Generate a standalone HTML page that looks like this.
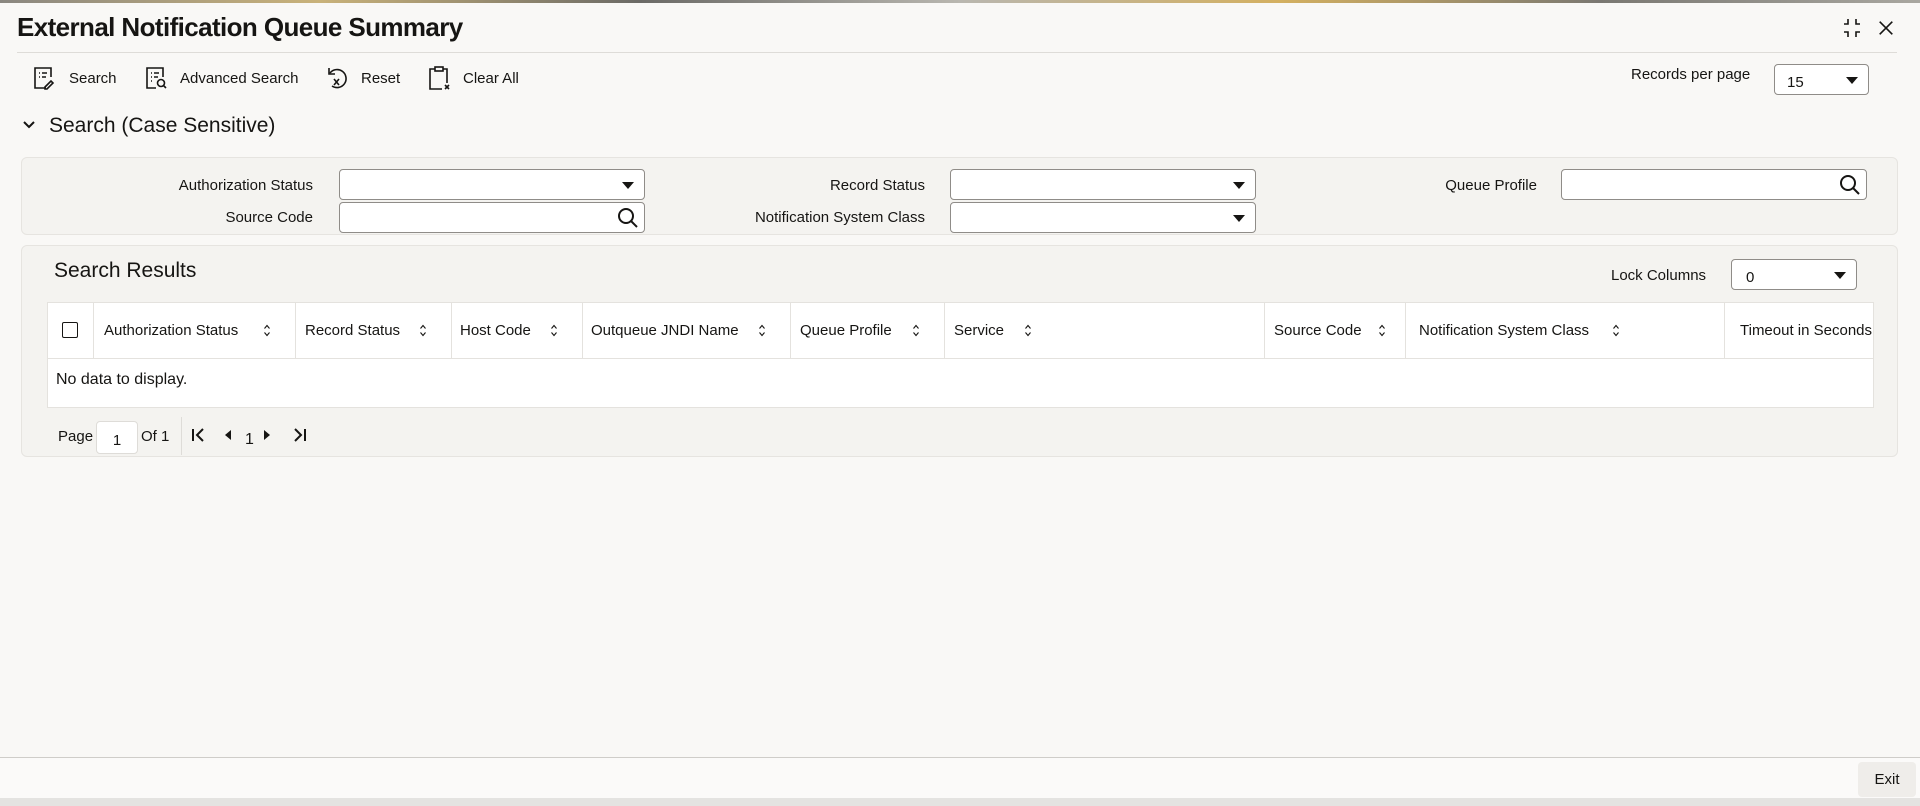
<!DOCTYPE html>
<html><head><meta charset="utf-8"><style>
*{box-sizing:border-box;margin:0;padding:0}
body{width:1920px;height:806px;overflow:hidden;background:#f9f8f6;font-family:"Liberation Sans",sans-serif;color:#161513;position:relative;font-size:15px}
.a{position:absolute;white-space:nowrap}
.lbl{position:absolute;text-align:right;font-size:15px;white-space:nowrap}
.inp{position:absolute;background:#fff;border:1px solid #8f8c88;border-radius:4px;height:31px}
.tri{position:absolute;right:10px;top:12px;width:0;height:0;border-left:6px solid transparent;border-right:6px solid transparent;border-top:7px solid #161513}
.mag{position:absolute;right:4px;top:3px}
.panel{position:absolute;left:21px;width:1877px;background:#f4f3f0;border:1px solid #e6e4e0;border-radius:6px}
.th{position:absolute;top:303px;height:56px;line-height:56px;font-size:15px;white-space:nowrap}
.vl{position:absolute;top:302px;height:56px;width:1px;background:#e4e2de}
.srt{position:absolute;top:324px}
</style></head><body>
<div class="a" style="left:0;top:0;width:1920px;height:3px;background:linear-gradient(90deg,#8a8780,#c9b27a,#6b6a66,#b9b7b0,#d4b060,#7a7872,#a9a7a0)"></div>
<div class="a" style="left:17px;top:12px;font-size:26px;font-weight:bold;letter-spacing:-0.6px">External Notification Queue Summary</div>
<svg class="a" style="left:1841px;top:17px" width="22" height="22" viewBox="0 0 22 22" fill="none" stroke="#161513" stroke-width="1.6"><path d="M7 2v5H3M15 2v5h4M7 20v-5H3M15 20v-5h4"/></svg>
<svg class="a" style="left:1877px;top:19px" width="18" height="18" viewBox="0 0 20 20" stroke="#161513" stroke-width="1.8"><path d="M3 3l14 14M17 3L3 17"/></svg>
<div class="a" style="left:17px;top:52px;width:1880px;height:1px;background:#dedcd8"></div>

<svg class="a" style="left:33px;top:66px" width="22" height="24" viewBox="0 0 22 24" fill="none" stroke="#161513" stroke-width="1.6"><path d="M13 22H2V2h16v9"/><path d="M6 7h1M9 7h5M6 11h1M9 11h4"/><path d="M12 21l6-6 2 2-6 6h-2z"/></svg>
<div class="a" style="left:69px;top:70px">Search</div>
<svg class="a" style="left:145px;top:66px" width="22" height="24" viewBox="0 0 22 24" fill="none" stroke="#161513" stroke-width="1.6"><path d="M11 22H2V2h16v9"/><path d="M6 7h1M9 7h5M6 11h1M9 11h4M6 15h1"/><circle cx="16" cy="17" r="3.5"/><path d="M18.5 19.5L21 22"/></svg>
<div class="a" style="left:180px;top:70px">Advanced Search</div>
<svg class="a" style="left:325px;top:65px" width="26" height="26" viewBox="0 0 26 26" fill="none" stroke="#161513" stroke-width="1.6"><path d="M5 8a9 9 0 1 1 2 13"/><path d="M4 3v6h6"/><path d="M9 14l5 6M14 14l-5 6"/></svg>
<div class="a" style="left:361px;top:70px">Reset</div>
<svg class="a" style="left:427px;top:65px" width="24" height="26" viewBox="0 0 24 26" fill="none" stroke="#161513" stroke-width="1.6"><path d="M8 4H3v20h12M16 4h4v14"/><rect x="8" y="2" width="8" height="4"/><path d="M18 20l4 4M22 20l-4 4"/></svg>
<div class="a" style="left:463px;top:70px">Clear All</div>

<div class="a" style="left:1631px;top:66px">Records per page</div>
<div class="inp" style="left:1774px;top:64px;width:95px;height:31px"><span class="a" style="left:12px;top:9px">15</span><div class="tri"></div></div>

<svg class="a" style="left:22px;top:120px" width="14" height="10" viewBox="0 0 14 10" fill="none" stroke="#161513" stroke-width="2"><path d="M2 2l5 5 5-5"/></svg>
<div class="a" style="left:49px;top:114px;font-size:21px">Search (Case Sensitive)</div>

<div class="panel" style="top:157px;height:78px"></div>
<div class="lbl" style="right:1607px;top:177px">Authorization Status</div>
<div class="inp" style="left:339px;top:169px;width:306px"><div class="tri"></div></div>
<div class="lbl" style="right:1607px;top:209px">Source Code</div>
<div class="inp" style="left:339px;top:202px;width:306px"><svg class="mag" width="24" height="24" viewBox="0 0 24 24" fill="none" stroke="#161513" stroke-width="2"><circle cx="10" cy="10" r="7"/><path d="M15 15l6 6"/></svg></div>
<div class="lbl" style="right:995px;top:177px">Record Status</div>
<div class="inp" style="left:950px;top:169px;width:306px"><div class="tri"></div></div>
<div class="lbl" style="right:995px;top:209px">Notification System Class</div>
<div class="inp" style="left:950px;top:202px;width:306px"><div class="tri"></div></div>
<div class="lbl" style="right:383px;top:177px">Queue Profile</div>
<div class="inp" style="left:1561px;top:169px;width:306px"><svg class="mag" width="24" height="24" viewBox="0 0 24 24" fill="none" stroke="#161513" stroke-width="2"><circle cx="10" cy="10" r="7"/><path d="M15 15l6 6"/></svg></div>

<div class="panel" style="top:245px;height:212px"></div>
<div class="a" style="left:54px;top:259px;font-size:21px">Search Results</div>
<div class="a" style="left:1611px;top:267px">Lock Columns</div>
<div class="inp" style="left:1731px;top:259px;width:126px;height:31px"><span class="a" style="left:14px;top:9px">0</span><div class="tri"></div></div>

<div class="a" style="left:47px;top:302px;width:1827px;height:106px;background:#fff;border:1px solid #e4e2de"></div>
<div class="a" style="left:47px;top:358px;width:1827px;height:1px;background:#e4e2de"></div>
<div class="a" style="left:62px;top:322px;width:16px;height:16px;border:1.5px solid #161513;border-radius:2px"></div>
<div class="vl" style="left:93px"></div><div class="vl" style="left:295px"></div><div class="vl" style="left:451px"></div><div class="vl" style="left:582px"></div><div class="vl" style="left:790px"></div><div class="vl" style="left:944px"></div><div class="vl" style="left:1264px"></div><div class="vl" style="left:1405px"></div><div class="vl" style="left:1724px"></div>
<div class="th" style="left:104px">Authorization Status</div>
<div class="th" style="left:305px">Record Status</div>
<div class="th" style="left:460px">Host Code</div>
<div class="th" style="left:591px">Outqueue JNDI Name</div>
<div class="th" style="left:800px">Queue Profile</div>
<div class="th" style="left:954px">Service</div>
<div class="th" style="left:1274px">Source Code</div>
<div class="th" style="left:1419px">Notification System Class</div>
<div class="th" style="left:1740px;width:134px;overflow:hidden">Timeout in Seconds</div>
<svg width="0" height="0" style="position:absolute"><defs><g id="s"><path d="M1.5 4.5l2.5-3 2.5 3M1.5 8.5l2.5 3 2.5-3" fill="none" stroke="#161513" stroke-width="1.1"/></g></defs></svg>
<svg class="srt" style="left:263px" width="8" height="13"><use href="#s"/></svg>
<svg class="srt" style="left:419px" width="8" height="13"><use href="#s"/></svg>
<svg class="srt" style="left:550px" width="8" height="13"><use href="#s"/></svg>
<svg class="srt" style="left:758px" width="8" height="13"><use href="#s"/></svg>
<svg class="srt" style="left:912px" width="8" height="13"><use href="#s"/></svg>
<svg class="srt" style="left:1024px" width="8" height="13"><use href="#s"/></svg>
<svg class="srt" style="left:1378px" width="8" height="13"><use href="#s"/></svg>
<svg class="srt" style="left:1612px" width="8" height="13"><use href="#s"/></svg>
<div class="a" style="left:56px;top:371px;font-size:16px">No data to display.</div>

<div class="a" style="left:58px;top:428px">Page</div>
<div class="a" style="left:96px;top:421px;width:42px;height:33px;background:#fff;border:1px solid #dedcd8;border-radius:4px;text-align:center;line-height:38px">1</div>
<div class="a" style="left:141px;top:428px">Of 1</div>
<div class="a" style="left:181px;top:417px;width:1px;height:38px;background:#dedcd8"></div>
<svg class="a" style="left:191px;top:427px" width="16" height="16" viewBox="0 0 16 16" fill="none" stroke="#161513" stroke-width="2"><path d="M2 2v12M12 2L6 8l6 6"/></svg>
<svg class="a" style="left:224px;top:429px" width="8" height="12"><path d="M7 1L1 6l6 5z" fill="#161513"/></svg>
<div class="a" style="left:245px;top:431px;font-size:16px">1</div>
<svg class="a" style="left:263px;top:429px" width="8" height="12"><path d="M1 1l6 5-6 5z" fill="#161513"/></svg>
<svg class="a" style="left:291px;top:427px" width="16" height="16" viewBox="0 0 16 16" fill="none" stroke="#161513" stroke-width="2"><path d="M4 2l6 6-6 6M14 2v12"/></svg>

<div class="a" style="left:0;top:757px;width:1920px;height:1px;background:#cfcdc9"></div>
<div class="a" style="left:0;top:758px;width:1920px;height:40px;background:#fbfaf9"></div>
<div class="a" style="left:1858px;top:762px;width:58px;height:35px;background:#efedea;border-radius:4px;text-align:center;line-height:35px">Exit</div>
<div class="a" style="left:0;top:798px;width:1920px;height:8px;background:#e4e3e1"></div>
</body></html>
